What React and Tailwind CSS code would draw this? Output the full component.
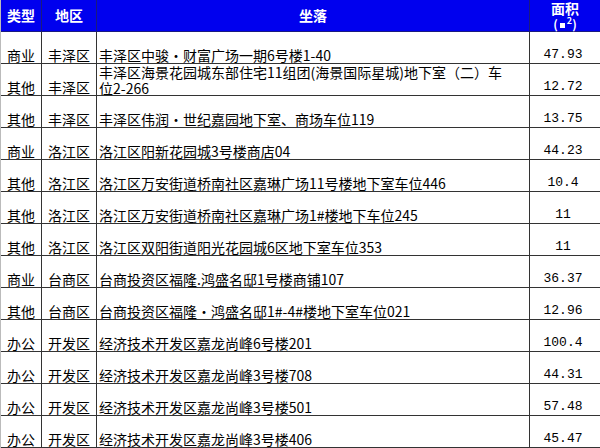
import React from 'react';

const rows = [
  { type: '商业', area: '丰泽区', addr: ['丰泽区中骏·财富广场一期6号楼1-40'], size: '47.93' },
  { type: '其他', area: '丰泽区', addr: ['丰泽区海景花园城东部住宅11组团(海景国际星城)地下室（二）车', '位2-266'], size: '12.72' },
  { type: '其他', area: '丰泽区', addr: ['丰泽区伟润·世纪嘉园地下室、商场车位119'], size: '13.75' },
  { type: '商业', area: '洛江区', addr: ['洛江区阳新花园城3号楼商店04'], size: '44.23' },
  { type: '其他', area: '洛江区', addr: ['洛江区万安街道桥南社区嘉琳广场11号楼地下室车位446'], size: '10.4' },
  { type: '其他', area: '洛江区', addr: ['洛江区万安街道桥南社区嘉琳广场1#楼地下车位245'], size: '11' },
  { type: '其他', area: '洛江区', addr: ['洛江区双阳街道阳光花园城6区地下室车位353'], size: '11' },
  { type: '商业', area: '台商区', addr: ['台商投资区福隆.鸿盛名邸1号楼商铺107'], size: '36.37' },
  { type: '其他', area: '台商区', addr: ['台商投资区福隆·鸿盛名邸1#-4#楼地下室车位021'], size: '12.96' },
  { type: '办公', area: '开发区', addr: ['经济技术开发区嘉龙尚峰6号楼201'], size: '100.4' },
  { type: '办公', area: '开发区', addr: ['经济技术开发区嘉龙尚峰3号楼708'], size: '44.31' },
  { type: '办公', area: '开发区', addr: ['经济技术开发区嘉龙尚峰3号楼501'], size: '57.48' },
  { type: '办公', area: '开发区', addr: ['经济技术开发区嘉龙尚峰3号楼406'], size: '45.47' },
];

const cell = 'h-[32px] border-b border-r border-[#333] flex overflow-hidden';
const head = 'h-[32px] bg-[#0000ee] text-white font-bold flex items-center justify-center border-r border-b border-[#1a1a80]';

export default function App() {
  return (
    <div
      className="w-[600px] h-[448px] bg-white overflow-hidden text-black text-[14px]"
      style={{ fontFamily: '"Noto Sans CJK SC", "Liberation Sans", sans-serif' }}
    >
      <div className="grid grid-cols-[41px_55px_433px_71px] border-l border-[#bbb]">
        {/* Header */}
        <div className={head}>类型</div>
        <div className={head}>地区</div>
        <div className={head}>坐落</div>
        <div className={`${head} flex-col`}>
          <span className="leading-[16px]">面积</span>
          <span className="text-[12px] leading-[15px]">
            (<span className="inline-block w-[5px] h-[5px] bg-white align-middle mx-[2px]" />
            <span className="align-super text-[9px] leading-[9px]">2</span>)
          </span>
        </div>

        {rows.map((r, i) => (
          <React.Fragment key={i}>
            <div className={`${cell} items-end justify-center leading-[16px]`}>{r.type}</div>
            <div className={`${cell} items-end justify-center leading-[16px]`}>{r.area}</div>
            {r.addr.length > 1 ? (
              <div className={`${cell} flex-col justify-start items-start pl-[2px] leading-[16px] whitespace-nowrap`}>
                {r.addr.map((line, j) => (
                  <span key={j}>{line}</span>
                ))}
              </div>
            ) : (
              <div className={`${cell} items-end pl-[2px] leading-[16px] whitespace-nowrap`}>
                {r.addr[0]}
              </div>
            )}
            <div
              className={`${cell} items-end justify-center pr-[4px] leading-[16px] text-[13px]`}
              style={{ fontFamily: '"Liberation Mono", monospace' }}
            >
              {r.size}
            </div>
          </React.Fragment>
        ))}
      </div>
    </div>
  );
}
